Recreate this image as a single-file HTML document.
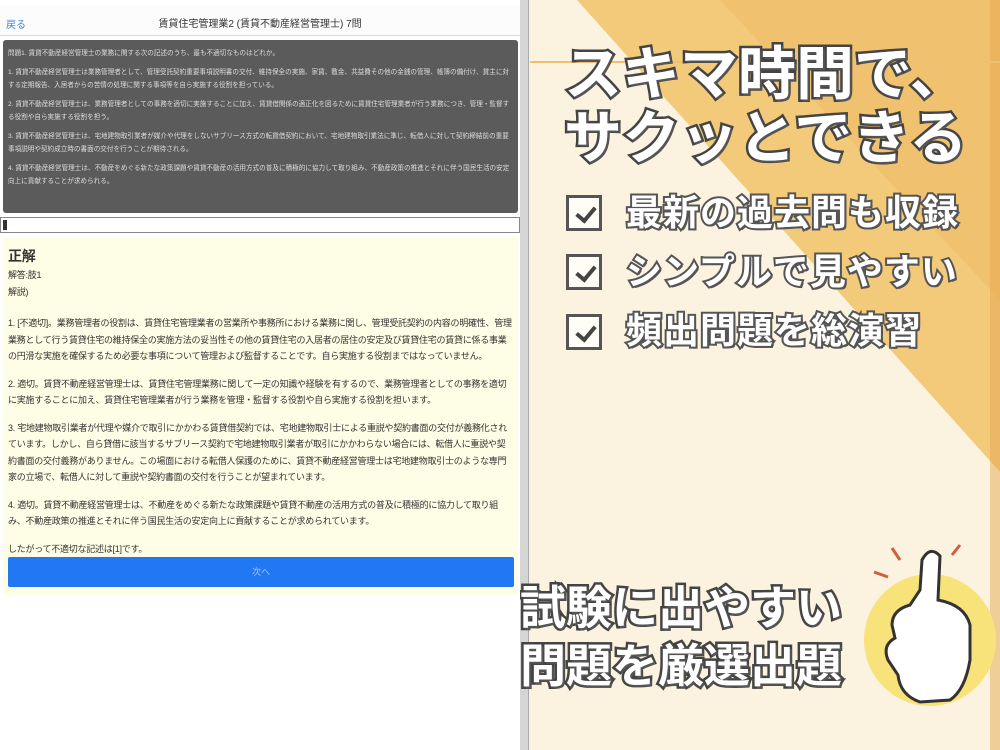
<!DOCTYPE html>
<html><head><meta charset="utf-8"><style>
*{margin:0;padding:0;box-sizing:border-box}
body{width:1000px;height:750px;overflow:hidden;background:#fff;font-family:"Liberation Sans","Noto Sans CJK JP",sans-serif;position:relative}
#left{position:absolute;left:0;top:0;width:520px;height:750px;background:#fff}
.hdr{position:absolute;top:6px;left:0;width:520px;height:30px;border-bottom:1px solid #ddd;background:#fcfcfc}
.hdr .back{position:absolute;left:6px;top:10px;font-size:10px;color:#3a86e0}
.hdr .t{position:absolute;left:0;width:520px;text-align:center;top:9px;font-size:10px;color:#333}
.q{position:absolute;left:3px;top:40px;width:515px;height:173px;background:#5b5b5b;border-radius:3px;color:#ddd;font-size:6.6px;line-height:13.5px;padding:7px 5px}
.q p{margin-bottom:5px}
.inp{position:absolute;left:0;top:217px;width:520px;height:16px;border:1px solid #888;background:#fff}
.inp:before{content:"";position:absolute;left:2px;top:2px;width:4px;height:10px;background:#333}
.ans{position:absolute;left:3px;top:238px;width:515px;height:357px;background:#fefde5;padding:9px 5px;color:#333;font-size:9px;letter-spacing:-0.25px;line-height:16.5px}
.ans h2{font-size:14px;line-height:18px;margin-bottom:2px}
.ans p.g{margin-top:11px}
.ans p.f{margin-top:15px}
.btn{position:absolute;left:8px;top:557px;width:506px;height:30px;background:#2178f2;color:#aac8f5;font-size:9px;text-align:center;line-height:30px;border-radius:2px}
#right{position:absolute;left:520px;top:0;width:480px;height:750px;background:#fbf2df;overflow:hidden}
.bar{position:absolute;left:0;top:0;width:9px;height:750px;background:#d5d5d5;border-right:1px solid #aaa}
.big{position:absolute;color:#fff;font-weight:bold;-webkit-text-stroke:5px #444;paint-order:stroke fill;white-space:nowrap;text-shadow:2px 2px 0 #555;line-height:1}
.box{position:absolute;left:46px;width:36px;height:36px;border:3px solid #555;background:#fffdf5}
.box:after{content:"";position:absolute;left:11px;top:5px;width:8px;height:15px;border-right:4px solid #444;border-bottom:4px solid #444;transform:rotate(40deg)}
.chk{font-size:36px;-webkit-text-stroke:4px #555;letter-spacing:1px}
</style></head><body>
<div id="left">
<div class="hdr"><span class="back">戻る</span><div class="t">賃貸住宅管理業2 (賃貸不動産経営管理士) 7問</div></div>
<div class="q">
<p>問題1. 賃貸不動産経営管理士の業務に関する次の記述のうち、最も不適切なものはどれか。</p>
<p>1. 賃貸不動産経営管理士は業務管理者として、管理受託契約重要事項説明書の交付、維持保全の実施、家賃、敷金、共益費その他の金銭の管理、帳簿の備付け、貸主に対する定期報告、入居者からの苦情の処理に関する事項等を自ら実施する役割を担っている。</p>
<p>2. 賃貸不動産経営管理士は、業務管理者としての事務を適切に実施することに加え、賃貸借関係の適正化を図るために賃貸住宅管理業者が行う業務につき、管理・監督する役割や自ら実施する役割を担う。</p>
<p>3. 賃貸不動産経営管理士は、宅地建物取引業者が媒介や代理をしないサブリース方式の転貸借契約において、宅地建物取引業法に準じ、転借人に対して契約締結前の重要事項説明や契約成立時の書面の交付を行うことが期待される。</p>
<p>4. 賃貸不動産経営管理士は、不動産をめぐる新たな政策課題や賃貸不動産の活用方式の普及に積極的に協力して取り組み、不動産政策の推進とそれに伴う国民生活の安定向上に貢献することが求められる。</p>
</div>
<div class="inp"></div>
<div class="ans">
<h2>正解</h2>
<div>解答:肢1</div>
<div>解説)</div>
<p class="f">1. [不適切]。業務管理者の役割は、賃貸住宅管理業者の営業所や事務所における業務に関し、管理受託契約の内容の明確性、管理業務として行う賃貸住宅の維持保全の実施方法の妥当性その他の賃貸住宅の入居者の居住の安定及び賃貸住宅の賃貸に係る事業の円滑な実施を確保するため必要な事項について管理および監督することです。自ら実施する役割まではなっていません。</p>
<p class="g">2. 適切。賃貸不動産経営管理士は、賃貸住宅管理業務に関して一定の知識や経験を有するので、業務管理者としての事務を適切に実施することに加え、賃貸住宅管理業者が行う業務を管理・監督する役割や自ら実施する役割を担います。</p>
<p class="g">3. 宅地建物取引業者が代理や媒介で取引にかかわる賃貸借契約では、宅地建物取引士による重説や契約書面の交付が義務化されています。しかし、自ら貸借に該当するサブリース契約で宅地建物取引業者が取引にかかわらない場合には、転借人に重説や契約書面の交付義務がありません。この場面における転借人保護のために、賃貸不動産経営管理士は宅地建物取引士のような専門家の立場で、転借人に対して重説や契約書面の交付を行うことが望まれています。</p>
<p class="g">4. 適切。賃貸不動産経営管理士は、不動産をめぐる新たな政策課題や賃貸不動産の活用方式の普及に積極的に協力して取り組み、不動産政策の推進とそれに伴う国民生活の安定向上に貢献することが求められています。</p>
<p class="g">したがって不適切な記述は[1]です。</p>
</div>
<div class="btn">次へ</div>
</div>
<div id="right">
<svg width="480" height="750" style="position:absolute;left:0;top:0">
<polygon points="57,0 480,0 480,472" fill="#f3c97a"/>
<polygon points="200,0 480,0 480,300" fill="#efbd66" opacity="0.6"/>
<rect x="470" y="0" width="10" height="750" fill="#e8a850" opacity="0.5"/>
<line x1="10" y1="62" x2="480" y2="62" stroke="#f0c070" stroke-width="2"/>
<circle cx="410" cy="640" r="66" fill="#f8e27a"/>
<path d="M400 590 L402 560 Q410 545 420 556 L418 600 Q445 605 450 625 L450 660 Q445 690 430 700 L400 702 Q380 695 378 675 L368 660 Q362 645 375 638 L372 625 Q372 610 390 605 Z" fill="#fff" stroke="#333" stroke-width="3"/>
<path d="M380 560 L372 548 M432 555 L440 545 M368 577 L354 572" stroke="#d0603a" stroke-width="3"/>
</svg>
<div class="bar"></div>
<div class="big" style="left:44px;top:46px;font-size:58px">スキマ時間で、</div>
<div class="big" style="left:44px;top:110px;font-size:58px">サクッとできる</div>
<div class="box" style="top:195px"></div>
<div class="big chk" style="left:106px;top:195px">最新の過去問も収録</div>
<div class="box" style="top:254px"></div>
<div class="big chk" style="left:106px;top:254px">シンプルで見やすい</div>
<div class="box" style="top:314px"></div>
<div class="big chk" style="left:106px;top:313px">頻出問題を総演習</div>
<div class="big" style="left:0px;top:585px;font-size:46px">試験に出やすい</div>
<div class="big" style="left:0px;top:643px;font-size:46px">問題を厳選出題</div>
</div>
</body></html>
